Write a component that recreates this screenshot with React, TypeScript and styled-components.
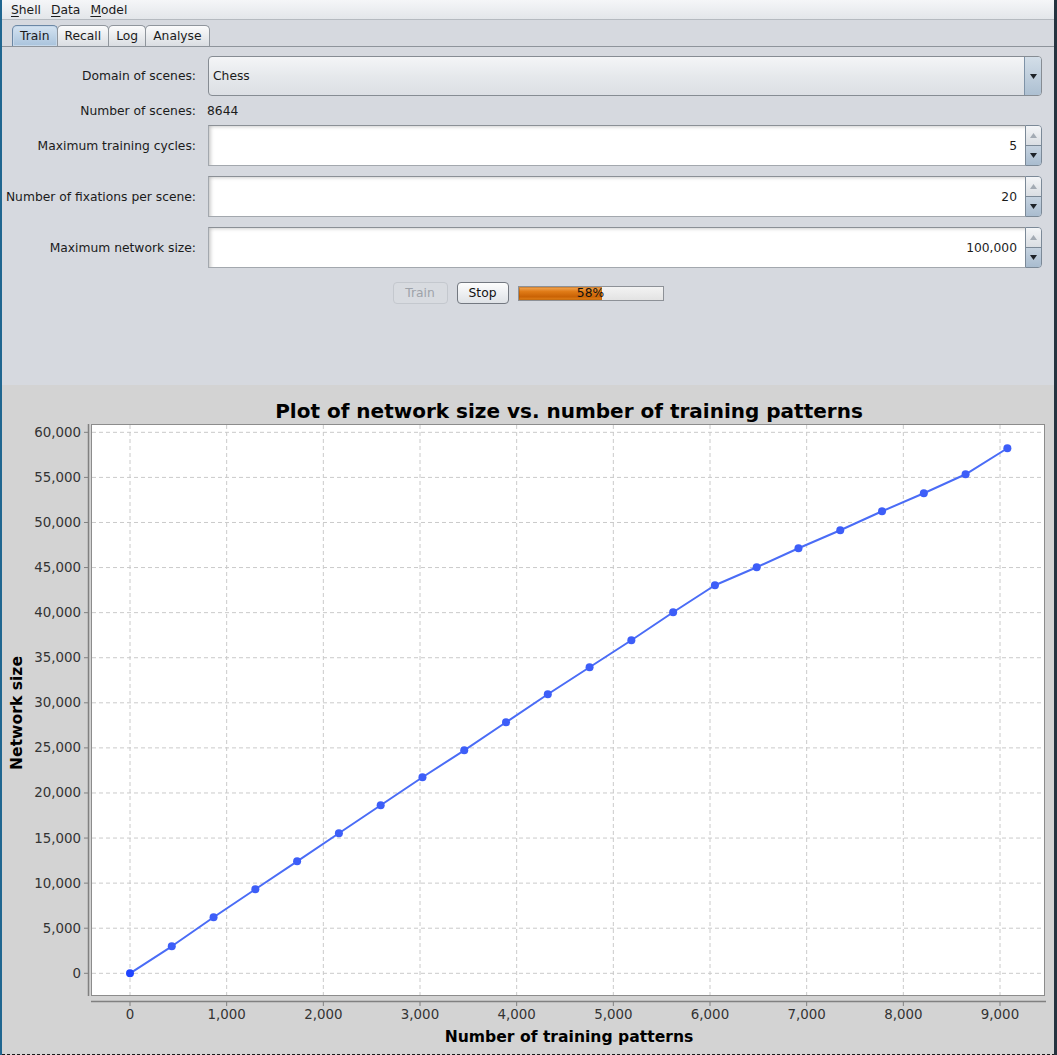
import React from "react";
import styled, { createGlobalStyle } from "styled-components";

// network size sampled after every 432 training patterns
const DATA = [
  0, 2995, 6211, 9317, 12422, 15528, 18634, 21739, 24734, 27840, 30945, 33940, 36935, 40040, 43035, 45031,
  47139, 49135, 51242, 53239, 55346, 58230,
];
const STEP = 432.2;

const sx = (v: number) => 98 + v * 0.096667;
const sy = (v: number) => 552.3 - v * 0.0090164;
const fmt = (n: number) => n.toLocaleString("en-US");

const GlobalStyle = createGlobalStyle`
  html, body {
    margin: 0;
    padding: 0;
  }
  body {
    width: 1057px;
    height: 1055px;
    overflow: hidden;
    background: #d6d9df;
    font-family: "DejaVu Sans", "Liberation Sans", sans-serif;
    font-size: 12.3px;
    color: #1b1b1b;
  }
`;

const Window = styled.div`
  width: 1057px;
  height: 1055px;
  box-sizing: border-box;
  border-left: 2px solid #1f6690;
  border-right: 3px solid #24333f;
  display: flex;
  flex-direction: column;
`;

const MenuBar = styled.div`
  height: 20px;
  box-sizing: border-box;
  padding-left: 9px;
  display: flex;
  align-items: center;
  gap: 10px;
  background: linear-gradient(#f5f6f8, #e3e6ea);
  border-bottom: 1px solid #b5bac0;
`;

const MenuItem = styled.span`
  u {
    text-decoration: underline;
    text-underline-offset: 2px;
  }
`;

const TabStrip = styled.div`
  height: 27px;
  box-sizing: border-box;
  padding-left: 10px;
  display: flex;
  align-items: flex-end;
  border-bottom: 1px solid #8e949b;
`;

const Tab = styled.div<{ $active?: boolean }>`
  height: 21px;
  box-sizing: border-box;
  padding: 0 7px;
  margin-right: -1px;
  display: flex;
  align-items: center;
  border: 1px solid ${(p) => (p.$active ? "#6a87a5" : "#8f959c")};
  border-bottom: none;
  border-radius: 5px 5px 0 0;
  background: ${(p) =>
    p.$active ? "linear-gradient(#d4e3f1, #a9c3dc)" : "linear-gradient(#fbfbfc, #e7e9ec 60%, #dadde2)"};
  box-shadow: ${(p) => (p.$active ? "inset 0 0 0 1px #c6d8ea" : "none")};
`;

const UpperPanel = styled.div`
  height: 338px;
  box-sizing: border-box;
  padding-top: 9px;
  display: flex;
  flex-direction: column;
`;

const FormRow = styled.div<{ $h: number; $gap?: number }>`
  height: ${(p) => p.$h}px;
  margin-top: ${(p) => p.$gap ?? 0}px;
  display: grid;
  grid-template-columns: 194px 834px;
  column-gap: 12px;
  align-items: center;
`;

const Label = styled.div`
  text-align: right;
  white-space: nowrap;
`;

const Value = styled.div`
  margin-left: -1px;
`;

const Combo = styled.div`
  height: 40px;
  box-sizing: border-box;
  display: flex;
  border: 1px solid #868c93;
  border-radius: 4px;
  background: linear-gradient(#f4f5f7, #e6e9ec 50%, #dcdfe4);
  overflow: hidden;
`;

const ComboText = styled.div`
  flex: 1;
  padding-left: 4px;
  display: flex;
  align-items: center;
`;

const ComboArrow = styled.div`
  width: 16px;
  display: flex;
  align-items: center;
  justify-content: center;
  border-left: 1px solid #7f93a7;
  background: linear-gradient(#d3dee8, #adc0d2);
`;

const Spinner = styled.div`
  height: 41px;
  display: flex;
`;

const SpinField = styled.div`
  flex: 1;
  box-sizing: border-box;
  display: flex;
  align-items: center;
  justify-content: flex-end;
  padding-right: 8px;
  background: #fff;
  border: 1px solid #a3a8ae;
  border-top-color: #8b9096;
  border-right: none;
  box-shadow: inset 4px 3px 4px -3px rgba(0, 0, 0, 0.28);
`;

const SpinButtons = styled.div`
  width: 17px;
  box-sizing: border-box;
  display: flex;
  flex-direction: column;
  border: 1px solid #7b8997;
  border-radius: 0 4px 4px 0;
  overflow: hidden;
`;

const SpinButton = styled.div<{ $down?: boolean }>`
  flex: 1;
  display: flex;
  align-items: center;
  justify-content: center;
  background: ${(p) => (p.$down ? "linear-gradient(#c6d3e0, #a9bccf)" : "linear-gradient(#f3f5f7, #dadee3)")};
  border-top: ${(p) => (p.$down ? "1px solid #7b8997" : "none")};
`;

const ButtonRow = styled.div`
  margin-top: 14px;
  height: 22px;
  display: flex;
  justify-content: center;
  align-items: center;
  gap: 9px;
`;

const Button = styled.div<{ $disabled?: boolean; $w: number }>`
  width: ${(p) => p.$w}px;
  height: 22px;
  box-sizing: border-box;
  display: flex;
  align-items: center;
  justify-content: center;
  border-radius: 4px;
  border: 1px solid ${(p) => (p.$disabled ? "#c4c8ce" : "#737880")};
  color: ${(p) => (p.$disabled ? "#9ea3aa" : "#111")};
  background: ${(p) => (p.$disabled ? "#d8dbe0" : "linear-gradient(#fdfdfd, #eceef1 55%, #dfe2e6)")};
`;

const Progress = styled.div`
  position: relative;
  width: 146px;
  height: 15px;
  box-sizing: border-box;
  border: 1px solid #8d9197;
  background: linear-gradient(#f3f3f3, #e3e3e3);
`;

const ProgressFill = styled.div`
  height: 100%;
  background: linear-gradient(#f2a95a, #e07b17 35%, #c96205 75%, #e3841d);
  box-shadow: inset 0 0 0 1px rgba(160, 80, 0, 0.35);
`;

const ProgressText = styled.div`
  position: absolute;
  inset: 0;
  display: flex;
  align-items: center;
  justify-content: center;
  line-height: 1;
  color: #111;
`;

const ChartPanel = styled.div`
  flex: 1;
  background: #d3d3d3;
  display: grid;
  grid-template-columns: 30px 1022px;
  grid-template-rows: 36px 605px 20px 1fr;
`;

const ChartTitle = styled.div`
  grid-column: 2;
  padding-top: 14px;
  padding-left: 52px;
  text-align: center;
  font-size: 20px;
  font-weight: bold;
  line-height: 24px;
  white-space: nowrap;
  color: #000;
`;

const YTitle = styled.div`
  grid-column: 1;
  grid-row: 2;
  padding-bottom: 22px;
  display: flex;
  align-items: center;
  justify-content: center;
  span {
    writing-mode: vertical-rl;
    transform: rotate(180deg);
    font-size: 15.6px;
    font-weight: bold;
    color: #000;
  }
`;

const XTitle = styled.div`
  grid-column: 2;
  grid-row: 3;
  padding-top: 2px;
  padding-left: 52px;
  text-align: center;
  font-size: 15.6px;
  font-weight: bold;
  line-height: 18px;
  color: #000;
`;

const FocusLine = styled.div`
  grid-column: 1 / 3;
  grid-row: 4;
  align-self: end;
  height: 1px;
  background: repeating-linear-gradient(90deg, #1a1a1a 0 3px, transparent 3px 5px);
`;

const Plot = styled.svg`
  grid-column: 2;
  grid-row: 2;
  display: block;
  font-family: "DejaVu Sans", "Liberation Sans", sans-serif;
`;

const Triangle = ({ up, color }: { up?: boolean; color: string }) => (
  <svg width="7" height="5" viewBox="0 0 7 5">
    <polygon points={up ? "0,5 7,5 3.5,0" : "0,0 7,0 3.5,5"} fill={color} />
  </svg>
);

const SpinBox = ({ value }: { value: string }) => (
  <Spinner>
    <SpinField>{value}</SpinField>
    <SpinButtons>
      <SpinButton>
        <Triangle up color="#a3abb4" />
      </SpinButton>
      <SpinButton $down>
        <Triangle color="#1d2228" />
      </SpinButton>
    </SpinButtons>
  </Spinner>
);

const NetworkChart = () => {
  const xTicks = Array.from({ length: 10 }, (_, i) => i * 1000);
  const yTicks = Array.from({ length: 13 }, (_, i) => i * 5000);
  const pts = DATA.map((v, i) => [sx(i * STEP), sy(v)]);
  return (
    <Plot width="1022" height="605" viewBox="0 0 1022 605">
      <rect x="59.5" y="3.5" width="953" height="571" fill="#fff" stroke="#8c8c8c" />
      {xTicks.map((t) => (
        <line key={"gx" + t} x1={sx(t)} x2={sx(t)} y1="4" y2="574" stroke="#cacaca" strokeDasharray="4 3" />
      ))}
      {yTicks.map((t) => (
        <line key={"gy" + t} x1="60" x2="1012" y1={sy(t)} y2={sy(t)} stroke="#cacaca" strokeDasharray="4 3" />
      ))}
      {/* axes */}
      <line x1="56.5" x2="56.5" y1="3" y2="575" stroke="#808080" strokeWidth="1.5" />
      <line x1="59" x2="1014" y1="580.5" y2="580.5" stroke="#808080" strokeWidth="1.5" />
      {yTicks.map((t) => (
        <g key={"ty" + t}>
          <line x1="52" x2="56" y1={sy(t)} y2={sy(t)} stroke="#808080" />
          <text x="49" y={sy(t)} fontSize="13.4" fill="#333" textAnchor="end" dominantBaseline="central">
            {fmt(t)}
          </text>
        </g>
      ))}
      {xTicks.map((t) => (
        <g key={"tx" + t}>
          <line x1={sx(t)} x2={sx(t)} y1="581" y2="585" stroke="#808080" />
          <text x={sx(t)} y="593" fontSize="13.4" fill="#333" textAnchor="middle" dominantBaseline="central">
            {fmt(t)}
          </text>
        </g>
      ))}
      <polyline
        points={pts.map((p) => p.join(",")).join(" ")}
        fill="none"
        stroke="#4a6cf6"
        strokeWidth="2"
        strokeLinejoin="round"
      />
      {pts.map(([x, y], i) => (
        <circle key={i} cx={x} cy={y} r="4" fill={i === 0 ? "#1f44ff" : "#3d5ef8"} />
      ))}
    </Plot>
  );
};

const App = () => {
  return (
    <>
      <GlobalStyle />
      <Window>
        <MenuBar>
          <MenuItem>
            <u>S</u>hell
          </MenuItem>
          <MenuItem>
            <u>D</u>ata
          </MenuItem>
          <MenuItem>
            <u>M</u>odel
          </MenuItem>
        </MenuBar>
        <TabStrip>
          <Tab $active>Train</Tab>
          <Tab>Recall</Tab>
          <Tab>Log</Tab>
          <Tab>Analyse</Tab>
        </TabStrip>
        <UpperPanel>
          <FormRow $h={40}>
            <Label>Domain of scenes:</Label>
            <Combo>
              <ComboText>Chess</ComboText>
              <ComboArrow>
                <Triangle color="#1d2228" />
              </ComboArrow>
            </Combo>
          </FormRow>
          <FormRow $h={29}>
            <Label>Number of scenes:</Label>
            <Value>8644</Value>
          </FormRow>
          <FormRow $h={41}>
            <Label>Maximum training cycles:</Label>
            <SpinBox value="5" />
          </FormRow>
          <FormRow $h={41} $gap={10}>
            <Label>Number of fixations per scene:</Label>
            <SpinBox value="20" />
          </FormRow>
          <FormRow $h={41} $gap={10}>
            <Label>Maximum network size:</Label>
            <SpinBox value="100,000" />
          </FormRow>
          <ButtonRow>
            <Button $disabled $w={55}>
              Train
            </Button>
            <Button $w={52}>Stop</Button>
            <Progress>
              <ProgressFill style={{ width: "58%" }} />
              <ProgressText>58%</ProgressText>
            </Progress>
          </ButtonRow>
        </UpperPanel>
        <ChartPanel>
          <ChartTitle>Plot of network size vs. number of training patterns</ChartTitle>
          <YTitle>
            <span>Network size</span>
          </YTitle>
          <NetworkChart />
          <XTitle>Number of training patterns</XTitle>
          <FocusLine />
        </ChartPanel>
      </Window>
    </>
  );
};

export default App;
